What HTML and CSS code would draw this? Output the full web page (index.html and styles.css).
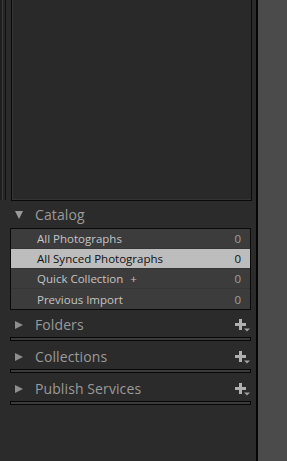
FILE: index.html
```html
<!DOCTYPE html>
<html lang="en">
<head>
    <meta charset="UTF-8">
    <title>Library - Left Panel</title>
    <link rel="stylesheet" href="styles.css">
</head>
<body>
    <div class="app">
        <div class="left-panel">
            <div class="preview-area">
                <div class="edge-strip"></div>
                <div class="navigator"></div>
            </div>

            <div class="section">
                <div class="section-header">
                    <span class="arrow arrow-down"></span>
                    <span class="section-title">Catalog</span>
                </div>
                <div class="catalog-list">
                    <div class="catalog-row">
                        <span>All Photographs</span>
                        <span class="count">0</span>
                    </div>
                    <div class="catalog-row selected">
                        <span>All Synced Photographs</span>
                        <span class="count">0</span>
                    </div>
                    <div class="catalog-row">
                        <span>Quick Collection <span class="plus-mark">+</span></span>
                        <span class="count">0</span>
                    </div>
                    <div class="catalog-row">
                        <span>Previous Import</span>
                        <span class="count">0</span>
                    </div>
                </div>
            </div>

            <div class="section collapsed">
                <div class="section-header">
                    <span class="arrow arrow-right"></span>
                    <span class="section-title">Folders</span>
                    <span class="add-btn">
                        <svg width="16" height="14" viewBox="0 0 16 14">
                            <path d="M4 0h3v4h4v3H7v4H4V7H0V4h4z" fill="#b0b0b0"/>
                            <path d="M9 9.5h6l-3 3z" fill="#a0a0a0"/>
                        </svg>
                    </span>
                </div>
                <div class="section-bar"></div>
            </div>

            <div class="section collapsed">
                <div class="section-header">
                    <span class="arrow arrow-right"></span>
                    <span class="section-title">Collections</span>
                    <span class="add-btn">
                        <svg width="16" height="14" viewBox="0 0 16 14">
                            <path d="M4 0h3v4h4v3H7v4H4V7H0V4h4z" fill="#b0b0b0"/>
                            <path d="M9 9.5h6l-3 3z" fill="#a0a0a0"/>
                        </svg>
                    </span>
                </div>
                <div class="section-bar"></div>
            </div>

            <div class="section collapsed">
                <div class="section-header">
                    <span class="arrow arrow-right"></span>
                    <span class="section-title">Publish Services</span>
                    <span class="add-btn">
                        <svg width="16" height="14" viewBox="0 0 16 14">
                            <path d="M4 0h3v4h4v3H7v4H4V7H0V4h4z" fill="#b0b0b0"/>
                            <path d="M9 9.5h6l-3 3z" fill="#a0a0a0"/>
                        </svg>
                    </span>
                </div>
                <div class="section-bar"></div>
            </div>
        </div>

        <div class="divider"></div>
        <div class="right-strip"></div>
    </div>
</body>
</html>
```

FILE: styles.css
```css
* {
    margin: 0;
    padding: 0;
    box-sizing: border-box;
}

body {
    font-family: 'Open Sans', 'Liberation Sans', sans-serif;
    background: #2b2b2b;
    width: 287px;
    height: 461px;
    overflow: hidden;
}

.app {
    display: flex;
    height: 461px;
}

.left-panel {
    width: 256px;
    background: #2b2b2b;
}

.divider {
    width: 2px;
    background: #050505;
}

.right-strip {
    flex: 1;
    background: #4b4b4b;
}

/* top preview / navigator area */
.preview-area {
    display: flex;
    height: 201px;
}

.edge-strip {
    width: 6px;
    height: 200px;
    background: #262626;
    border-left: 2px solid #1e1e1e;
    border-right: 1px solid #111;
    box-shadow: inset 1px 0 0 #3a3a3a;
}

.navigator {
    margin-left: 5px;
    width: 241px;
    height: 201px;
    background: #292929;
    border: 1px solid #0a0a0a;
    border-top: none;
    box-shadow: inset 1px -1px 0 #353535;
}

/* sections */
.section {
    padding: 0 5px 0 10px;
}

.section-header {
    display: flex;
    align-items: center;
    height: 27px;
    padding-left: 5px;
    color: #9a9a9a;
    font-size: 14px;
}

.section.collapsed {
    padding-bottom: 1px;
}

.section.collapsed .section-header {
    height: 27px;
    padding-top: 2px;
}

.arrow {
    width: 0;
    height: 0;
    margin-right: 12px;
}

.arrow-down {
    border-left: 4px solid transparent;
    border-right: 4px solid transparent;
    border-top: 8px solid #9a9a9a;
}

.arrow-right {
    border-top: 4px solid transparent;
    border-bottom: 4px solid transparent;
    border-left: 8px solid #8f8f8f;
}

.section-title {
    flex: 1;
    letter-spacing: 0.1px;
}

.add-btn {
    display: flex;
    margin-right: 0;
    margin-top: 2px;
}

.section-bar {
    height: 4px;
    border: 1px solid #070707;
    background: #3a3a3a;
}

/* catalog list */
.catalog-list {
    border: 1px solid #0a0a0a;
    background: #3c3c3c;
}

.catalog-row {
    display: flex;
    justify-content: space-between;
    align-items: center;
    height: 20px;
    padding: 0 9px 0 26px;
    font-size: 11.5px;
    color: #c4c4c4;
    border-bottom: 1px solid #353535;
}

.catalog-row:last-child {
    border-bottom: none;
}

.catalog-row.selected {
    background: #bdbdbd;
    color: #111;
}

.count {
    color: #a0a0a0;
}

.catalog-row.selected .count {
    color: #111;
}

.plus-mark {
    margin-left: 4px;
}
```
